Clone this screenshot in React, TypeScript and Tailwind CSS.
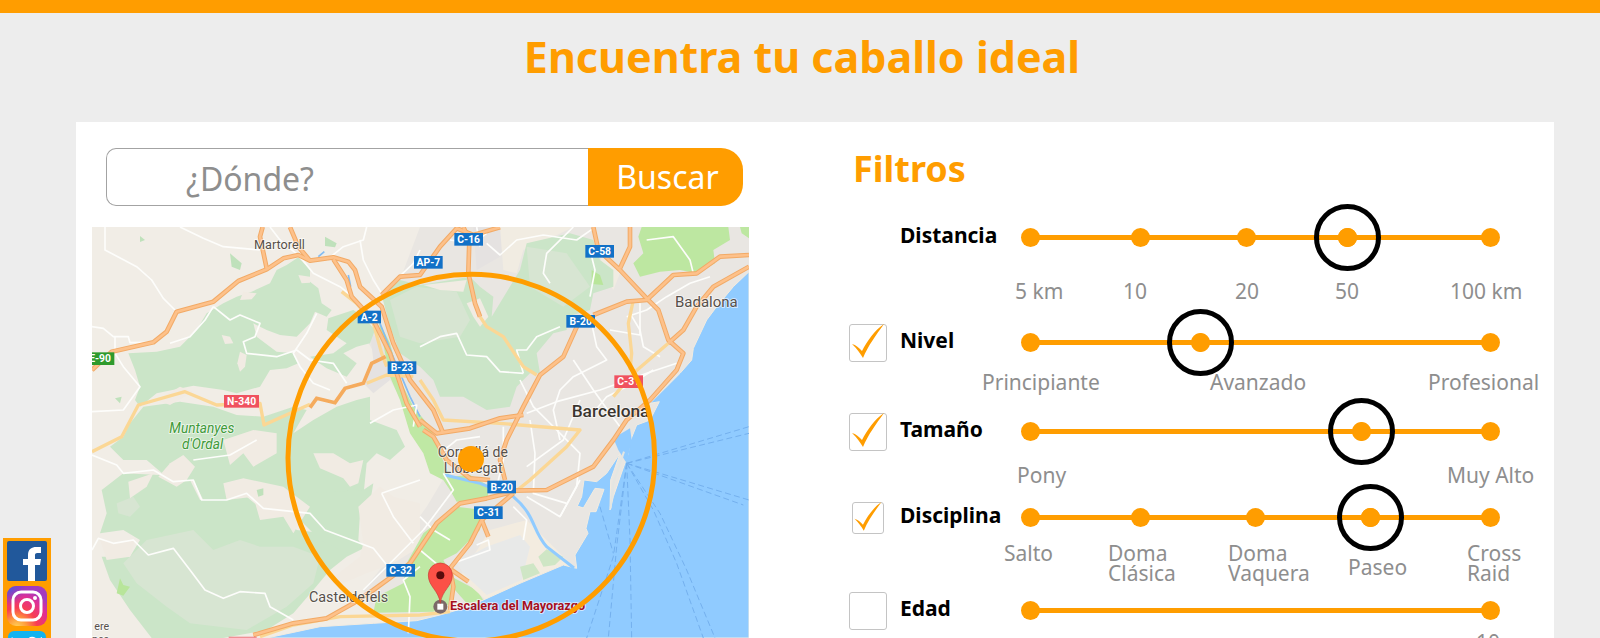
import { useState, type ReactNode } from "react";

type Shield = { x: number; y: number; w?: number; text: string; fill?: string };

const shields: Shield[] = [
  { x: 1002, y: 108, w: 86, text: "AP-7" },
  { x: 1123, y: 39, text: "C-16" },
  { x: 1516, y: 75, text: "C-58" },
  { x: 833, y: 272, w: 70, text: "A-2" },
  { x: 923, y: 424, text: "B-23" },
  { x: 1459, y: 285, text: "B-20" },
  { x: 1603, y: 466, text: "C-31", fill: "#f0525f" },
  { x: 432, y: 525, w: 105, text: "N-340", fill: "#f0525f" },
  { x: 17, y: 397, text: "E-90", fill: "#2f9a2c" },
  { x: 1222, y: 782, text: "B-20" },
  { x: 1182, y: 859, text: "C-31" },
  { x: 919, y: 1032, text: "C-32" },
];

const parks = [
  "M570 190L590 150L620 135L655 112L690 150V185L715 205L725 250L755 270L740 290L705 275L690 310L650 350L600 345L560 330L520 310L530 350L590 395L640 400L655 430L620 445L570 450L540 500L470 520L430 510L340 497L230 520L180 560L165 540L180 500L165 450L145 400L230 395L300 380L350 330L380 280L430 250L470 230L515 215Z",
  "M745 295L820 270L850 290L885 330L870 370L830 380L790 400L830 430L800 470L740 445L690 410L760 400L800 370L740 330Z",
  "M190 560L300 545L400 560L470 585L550 590L640 560L680 570L640 640L700 600L770 560L830 540L870 530V600L950 630L975 680L930 720L890 700L860 730L850 830L790 830L740 850L700 880L650 870L560 860L520 800L470 790L440 840L370 840L340 780L270 780L200 720L130 720L90 680L130 650L150 610Z",
  "M130 760L240 765L330 780L360 840L500 830L560 880L620 890L650 930L730 940L860 980L800 1010L750 1050L700 1110L640 1180L560 1230L430 1254H215L150 1170L90 1080L65 1010L150 1010L180 960L130 930L60 940L80 880L65 810Z",
  "M690 820L850 810L880 790L870 850L840 880L835 960L850 980L800 1000L720 960L660 900Z",
  "M905 225L960 180L1020 195L1170 170L1200 200L1240 230L1235 290L1320 150L1340 70L1470 40L1540 60L1560 120L1600 150V200L1540 220L1530 270L1460 290V330L1420 340L1370 400L1380 460L1350 460L1310 500L1290 560L1220 570L1150 530L1080 530L1060 480L1020 440L960 400L930 320Z",
];

const clearings = [
  "M300 500L230 540L270 555L340 515Z",
  "M480 395L500 405L495 440L480 455L472 430Z",
  "M425 345L450 350L460 370L435 372Z",
  "M655 165L690 170V188L665 190Z",
  "M490 215L530 220L515 238L480 240Z",
  "M700 700L760 700L810 730L850 720L835 790L810 800L790 775L720 745Z",
  "M270 730L310 705L345 740L320 780L290 800L235 770Z",
  "M430 660L520 630L590 640V700L520 740L490 700L450 735Z",
  "M145 785L220 760L200 800L150 835Z",
  "M430 790L490 775L610 800L690 860L640 940L610 890L540 900L520 830L440 840Z",
  "M60 960L120 970L165 960L150 1010L80 1020Z",
  "M835 860L900 800L940 830L1020 850V980L940 1030L860 1060L790 1090L750 1080L840 1010L850 970Z",
  "M1030 195L1160 180L1150 215L1080 210Z",
  "M1160 250L1200 235L1225 290L1200 320L1180 290Z",
];

const shade = [
  "M200 960L340 930L400 990L480 960L540 980L640 980L720 1010L700 1090L620 1160L500 1230L330 1210L260 1160L170 1090L130 1030Z",
  "M930 240L1010 200L1130 215L1170 300L1140 350L1020 370L960 350Z",
  "M1340 80L1460 100L1530 200L1450 260L1350 200Z",
  "M110 850L160 830L180 860L150 890L115 880Z",
];

const minorRoads = [
  "M36 320L70 325L100 350L145 350L150 368L220 367",
  "M300 21L370 55L430 80L540 90",
  "M75 21V90L170 140L215 180L250 235L285 270",
  "M570 21L600 60L660 110L700 160L780 200L830 240",
  "M840 60L850 120L880 180L905 220L1000 130L1020 90",
  "M740 120L790 80L850 60L860 21",
  "M36 575L130 570L180 500L130 440L105 400V350",
  "M400 260L450 300L480 285L540 310L525 350L490 365L500 400L590 410L650 390L690 420L760 430L800 490",
  "M270 370L330 350L375 300L400 260",
  "M710 280L680 340L640 400L660 440L700 490L750 510",
  "M870 610L940 570L1010 555L1000 620",
  "M36 705L110 735L130 760L220 750L280 785L340 780L365 840L440 840L500 820L550 865L690 880L735 930L880 985L920 1035",
  "M340 720L450 705L530 660",
  "M36 990L55 955L100 970L160 960L205 1005L280 985L330 1050L375 1110L430 1135L480 1115L555 1120L570 1160L640 1200",
  "M850 1110L1030 930L1120 810L1090 760",
  "M905 820L940 890L1000 970",
  "M905 820L1020 780",
  "M985 1240L990 1130L970 1080L1020 1040",
  "M1020 380L1080 350L1130 340L1160 405L1220 410L1260 455L1330 460",
  "M1110 60L1180 70L1220 40",
  "M1220 70L1260 105L1310 60L1390 45L1490 60L1540 25",
  "M1480 21L1400 100L1390 160L1410 190",
  "M1330 460L1310 390L1340 390L1370 350L1440 320",
  "M1530 230L1545 150L1530 90",
  "M1200 80L1190 21",
  "M1535 310L1550 380L1580 420L1480 470L1440 510L1420 570L1440 660",
  "M1340 580L1430 545L1560 510L1700 460L1790 430",
  "M1320 480L1360 560L1420 620L1500 700L1490 800L1440 890L1340 830",
  "M1350 600L1365 700L1360 820L1460 850",
  "M1480 420L1540 510L1590 580L1620 620",
  "M1500 540L1450 660L1340 740",
  "M1530 590L1580 530L1640 500L1720 450",
  "M1640 290L1700 270L1760 230L1830 190L1890 170",
  "M1650 280L1680 330L1690 380L1740 410",
  "M1590 330L1680 345V250",
  "M1700 60L1780 50L1830 120L1840 160",
  "M1020 890L1060 930L1110 960",
  "M1020 990L1080 1040",
  "M1120 1030L1230 990L1225 960L1190 975",
  "M1270 620L1270 720L1250 800",
  "M1300 860L1340 900L1330 960",
  "M1080 700L1130 660L1200 650",
  "M1440 890L1500 780",
];

const yellowRoads = [
  "M36 695L125 650L175 555L315 515L410 555L540 550L552 615L640 575L690 553",
  "M785 215L830 250L880 310L905 400L920 440",
  "M1200 290L1220 320L1270 350L1330 440L1370 465",
  "M1020 480L1060 540L1090 600L1260 610L1500 630L1460 680L1350 780L1300 820",
  "M1660 240L1645 310L1655 400L1650 450",
  "M1765 370L1660 460L1600 530",
  "M860 490L920 465L1000 470",
  "M1110 1175L1020 1185L780 1190L640 1215L540 1250",
];

const highways = [
  "M36 450L95 395L220 367L260 335L290 275L400 245L475 183L560 148L610 115L655 105L690 122L760 112L805 125L825 150L840 200L905 260L940 370L990 480L1060 570L1090 640",
  "M548 21L540 50L560 145",
  "M630 21L655 80L690 122",
  "M760 118L800 180L815 230L880 300L930 400L980 550L1020 620",
  "M905 225L960 170L1020 165L1080 80L1130 25L1180 45L1260 22",
  "M1150 21L1168 60L1165 160L1185 250L1200 290",
  "M1540 21L1555 90L1620 150L1700 235L1735 270L1765 360L1810 400L1790 450L1710 540L1640 600L1600 660L1540 740L1400 810L1300 812",
  "M1650 21V80L1620 145",
  "M1540 285L1640 245L1700 240L1780 165L1850 160L1920 110L2007 105",
  "M2007 140L1900 200L1850 260L1810 330L1765 370",
  "M1495 310L1450 410L1380 465L1330 560L1280 660L1260 720L1275 780",
  "M1330 585L1260 595L1170 625L1070 640L1020 600",
  "M520 1245L640 1210L740 1195L820 1150L880 1110L990 1030L1020 985L1070 910L1140 850L1220 835L1300 815",
  "M1300 820L1205 900L1170 970L1110 1045L1120 1100L1110 1170",
  "M1205 900L1225 950",
  "M1115 1050L1165 1085",
  "M1030 630L1060 650L1100 720L1170 775L1230 780",
];

const ferries = [
  "M1640 730L2007 620",
  "M1640 730L2007 640",
  "M1640 730L2007 840",
  "M1640 730L1990 855",
  "M1640 730L1720 870L1790 1030L1870 1254",
  "M1640 730L1740 880L1820 1050L1905 1254",
  "M1640 730L1650 960L1655 1254",
  "M1640 730L1610 980L1585 1254",
  "M1640 730L1600 1010L1520 1254",
  "M1560 860L1600 1000",
];

function Paths({ d, ...rest }: { d: string[] } & Omit<React.SVGProps<SVGGElement>, "d">) {
  return (
    <g {...rest}>
      {d.map((p) => (
        <path key={p} d={p} />
      ))}
    </g>
  );
}

function AreaMap() {
  return (
    <svg
      viewBox="36 21 1971 1233"
      preserveAspectRatio="xMidYMin slice"
      className="block h-[411px] w-full"
      fontFamily="Roboto, sans-serif"
      role="img"
      aria-label="Mapa de Barcelona"
    >
      <rect x="36" y="21" width="1971" height="1233" fill="#f1ede6" />
      <path d="M1020 21H2007V1254H1020L880 1190L850 1110L940 1000L1040 860L1100 760L1000 600L860 360L960 180Z" fill="#e9e6e2" />
      <path d="M870 340L920 370L930 480L880 520L850 490L880 420ZM880 1000L980 900L1010 960L930 1040ZM1180 22H1300L1260 110L1190 150Z" fill="#e5e2e1" />
      <path d="M1260 21H1480L1400 60L1330 90L1310 160L1270 150ZM1560 100L1620 160L1600 210L1570 160Z" fill="#f1ece2" />
      <Paths d={parks} fill="#cbe5c8" />
      <Paths d={shade} fill="#d7e5d2" />
      <Paths d={clearings} fill="#f1ebe3" />
      <path d="M450 100L485 130L480 150L455 140ZM180 48L195 60L180 66ZM735 50L770 70L765 82L735 78ZM105 535L125 530L120 550ZM530 810L550 805V825L535 830Z" fill="#bfe1bb" />
      <path d="M1685 21H1945L1950 60L1900 90L1905 130L1850 160L1800 150L1740 155L1680 170L1660 130L1690 100L1675 50ZM1980 21H2007V55L1985 40Z" fill="#bde7a1" />
      <path d="M120 1075L130 1095L150 1100L130 1127L110 1120ZM1535 150L1560 165L1570 195L1535 192Z" fill="#b8e59a" />
      <path
        d="M895 300L930 370L960 480L1000 560L1050 620L1080 700L1110 770L1170 765L1222 795L1225 835L1130 845L1110 810L1090 780L1050 760L1030 700L990 640L960 540L930 470Z"
        fill="#bfe8a4"
      />
      <path
        d="M1030 940L1130 860L1210 870L1200 930L1130 1000L1090 1020L1110 1060L1115 1150L1060 1175L880 1178L890 1130L970 1090L980 1030Z"
        fill="#bfe8a4"
      />
      <path d="M1115 1070L1190 1110L1210 1140L1160 1150L1125 1110Z" fill="#bfe8a4" />
      <path d="M1230 930L1340 900L1410 970L1480 1040L1330 1090L1215 1138L1140 1070Z" fill="#f3ece0" />
      <path d="M1130 1030L1220 980L1320 945L1350 980L1325 1080L1220 1125L1150 1060Z" fill="#e8e9e8" />
      <path d="M1375 1010L1400 988L1450 1010L1425 1035L1390 1040ZM1320 1040L1360 1030L1380 1060L1330 1080Z" fill="#cfe6c5" />
      <path
        d="M2007 155L1960 200L1910 260L1880 300L1840 385L1835 420L1800 460L1760 500L1710 550L1738 545L1710 600L1670 615L1648 670L1645 700L1600 830L1590 870L1592 780L1620 700L1580 760L1550 785L1512 780L1505 830L1492 858L1510 864L1545 805L1572 808L1548 875L1530 875L1518 925L1524 940L1485 1005L1490 1045L1450 1035L1320 1090L1210 1140L1150 1165L1080 1185L1010 1202L880 1210L720 1220L650 1235L560 1254H2007Z"
        fill="#90cbff"
        stroke="#f3ece0"
        strokeWidth="3"
      />
      <path d="M1600 655L1625 640L1650 625L1655 660L1640 730L1615 690Z" fill="#90cbff" />
      <path d="M1592 865L1600 790L1632 695" fill="none" stroke="#e4e6e2" strokeWidth="6" />
      <path d="M805 165L812 200M900 310L935 400L990 530L1020 590M715 110L733 95" fill="none" stroke="#84bcf2" strokeWidth="5" />
      <path d="M1095 765L1200 790L1300 830C1370 890 1355 930 1400 980L1482 1044" fill="none" stroke="#90cbff" strokeWidth="9" />
      <Paths d={minorRoads} fill="none" stroke="#fdfdfb" strokeWidth="5" strokeLinejoin="round" />
      <Paths d={yellowRoads} fill="none" stroke="#fbd795" strokeWidth="10" strokeLinejoin="round" />
      <Paths d={highways} fill="none" stroke="#f2aa66" strokeWidth="14" strokeLinejoin="round" />
      <Paths d={highways} fill="none" stroke="#fdc18a" strokeWidth="8" strokeLinejoin="round" />
      <path d="M690 563L710 535L765 548L795 505L850 490L875 430L917 410" fill="none" stroke="#f5ab5d" strokeWidth="11" />
      <Paths d={ferries} fill="none" stroke="#74b0ee" strokeWidth="3" strokeDasharray="18 10" />

      {shields.map((s) => (
        <g key={`${s.x}-${s.text}`}>
          <rect x={s.x} y={s.y} width={s.w ?? 86} height="38" fill={s.fill ?? "#1271c7"} />
          <text x={s.x + (s.w ?? 86) / 2} y={s.y + 30} textAnchor="middle" fontSize="31" fontWeight="700" fill="#fff">
            {s.text}
          </text>
        </g>
      ))}

      <g fill="#57504a" stroke="#fff" strokeOpacity="0.7" strokeWidth="5" paintOrder="stroke" fontSize="38">
        <text x="522" y="86">Martorell</text>
        <text x="1785" y="260" fontSize="45">Badalona</text>
        <text x="1073" y="711" fontSize="42">Cornellá de</text>
        <text x="1091" y="760" fontSize="42">Llobregat</text>
        <text x="687" y="1145" fontSize="43">Casteldefels</text>
        <text x="43" y="1230" fontSize="32">ere</text>
        <text x="36" y="1268" fontSize="32">nes</text>
        <text x="1475" y="592" fontSize="52" fontWeight="500" fill="#3b352f">Barcelona</text>
        <g fontStyle="italic" fill="#3f9a3a" fontSize="41">
          <text x="268" y="638">Muntanyes</text>
          <text x="306" y="686">d'Ordal</text>
        </g>
        <text x="1110" y="1171" fontSize="38" fontWeight="700" fill="#a5101f">Escalera del Mayorazgo</text>
      </g>
      <rect x="446" y="1250" width="84" height="10" fill="#f0525f" opacity="0.6" />

      <circle cx="1081" cy="1160" r="21" fill="#7b6868" />
      <rect x="1072" y="1151" width="18" height="18" fill="#fff" />
      <path d="M1081 1150C1076 1110 1045 1100 1045 1065A36 36 0 0 1 1117 1065C1117 1100 1086 1110 1081 1150Z" fill="#fb5147" stroke="#c93a34" strokeWidth="2" />
      <circle cx="1081" cy="1066" r="12" fill="#590c0c" />
      <circle cx="1174" cy="713" r="550" fill="none" stroke="#ff9d00" strokeWidth="15" />
      <circle cx="1173" cy="717" r="39" fill="#ff9d00" />
    </svg>
  );
}

type FilterProps = {
  id: string;
  label: string;
  stops?: number[];
  value?: number;
  checkable?: boolean;
  small?: boolean;
  className: string;
  children: ReactNode;
};

function FilterRow({ id, label, stops = [0, 100], value, checkable = true, small, className, children }: FilterProps) {
  const [position, setPosition] = useState(value ?? 0);
  const [active, setActive] = useState(value !== undefined);
  return (
    <div className={`flex ${className}`}>
      <div className="flex h-[67px] w-[55px] shrink-0 items-center pl-1">
        {checkable && (
          <span className="relative flex">
            <input
              type="checkbox"
              aria-label={`Filtrar por ${label}`}
              checked={active}
              onChange={(e) => setActive(e.target.checked)}
              className={`appearance-none rounded-[3px] border border-[#c4c4c4] bg-white ${small ? "mx-[3px] size-8" : "size-[38px]"}`}
            />
            {active && (
              <svg viewBox="0 0 38 38" className="pointer-events-none absolute inset-0 size-full overflow-visible" aria-hidden="true">
                <path d="M3 20C7 21 10 24 13 27C18 17 26 6 35 0C27 11 19 22 14 34C11 29 8 25 3 20Z" fill="#ff9d00" />
              </svg>
            )}
          </span>
        )}
      </div>
      <label htmlFor={id} className="flex h-[67px] w-[82px] shrink-0 items-center pb-1 text-[21px] font-bold text-black">
        {label}
      </label>
      <div className="min-w-0 flex-1">
        <div className="relative mr-[30px] ml-[14px] h-[67px]">
          <div className="absolute inset-x-[34px] top-[31px] h-[5px] bg-[#ff9d00]">
            {stops.map((s) => (
              <span key={s} className="absolute -top-[7px] -ml-[9px] size-[19px] rounded-full bg-[#ff9d00]" style={{ left: `${s}%` }} />
            ))}
          </div>
          <input
            id={id}
            type="range"
            min={0}
            max={100}
            step="any"
            disabled={!active}
            value={position}
            onChange={(e) => setPosition(Number(e.target.value))}
            className="absolute inset-0 m-0 h-[67px] w-full appearance-none bg-transparent [&::-webkit-slider-thumb]:size-[67px] [&::-webkit-slider-thumb]:appearance-none [&::-webkit-slider-thumb]:rounded-full [&::-webkit-slider-thumb]:border-[5px] [&::-webkit-slider-thumb]:border-black [&::-webkit-slider-thumb]:bg-[radial-gradient(circle,#ff9d00_9px,transparent_10px)] disabled:[&::-webkit-slider-thumb]:opacity-0"
          />
        </div>
        {children}
      </div>
    </div>
  );
}

const scale = "grid text-[21px] leading-5 font-normal text-[#8e8e8e]";

export default function App() {
  return (
    <div className="relative h-screen overflow-hidden bg-[#ededed] font-['Noto_Sans','Open_Sans',sans-serif]">
      <div className="h-[13px] bg-[#ff9d00]" />
      <h1 className="pt-[11px] pl-1 text-center text-[43px] leading-[66px] font-bold text-[#ff9d00]">Encuentra tu caballo ideal</h1>

      <main className="mt-8 mr-[46px] ml-[76px] grid min-h-screen grid-cols-[minmax(0,657fr)_minmax(0,709fr)] content-start gap-x-24 bg-white pl-4">
        <section className="pt-[26px]">
          <form className="mr-1.5 ml-3.5 flex h-[58px]" onSubmit={(e) => e.preventDefault()}>
            <input
              type="text"
              aria-label="¿Dónde?"
              placeholder="¿Dónde?"
              className="min-w-0 flex-1 rounded-l-[10px] border border-r-0 border-[#a3a3a3] bg-white pt-1 pl-[79px] text-[32px] text-[#8e8e8e] outline-none placeholder:text-[#8e8e8e] placeholder:opacity-100"
            />
            <button type="submit" className="w-[155px] rounded-r-[22px] bg-[#ff9d00] pl-1 text-[32px] leading-none text-white">
              Buscar
            </button>
          </form>
          <div className="mt-[21px]">
            <AreaMap />
          </div>
        </section>

        <section className="pt-6">
          <h2 className="pl-2 text-4xl leading-[46px] font-bold text-[#ff9d00]">Filtros</h2>
          <div className="pt-3">
            <FilterRow id="distancia" label="Distancia" checkable={false} stops={[0, 24, 47, 69, 100]} value={69} className="h-[105px]">
              <div className={`${scale} grid-cols-[108fr_112fr_100fr_115fr_104fr] pt-[10px] pl-[33px]`}>
                <span>5 km</span>
                <span>10</span>
                <span>20</span>
                <span>50</span>
                <span>100 km</span>
              </div>
            </FilterRow>
            <FilterRow id="nivel" label="Nivel" value={37} className="h-[89px]">
              <div className={`${scale} -mt-1 grid-cols-[228fr_218fr_126fr]`}>
                <span>Principiante</span>
                <span>Avanzado</span>
                <span>Profesional</span>
              </div>
            </FilterRow>
            <FilterRow id="tamano" label="Tamaño" value={72} className="h-[86px]">
              <div className={`${scale} grid-cols-[430fr_107fr] pl-[35px]`}>
                <span>Pony</span>
                <span>Muy Alto</span>
              </div>
            </FilterRow>
            <FilterRow id="disciplina" label="Disciplina" small stops={[0, 24, 49, 74, 100]} value={74} className="h-[93px]">
              <div className={`${scale} -mt-2 grid-cols-[104fr_120fr_120fr_119fr_87fr] pl-[22px]`}>
                <span>Salto</span>
                <span>Doma<br />Clásica</span>
                <span>Doma<br />Vaquera</span>
                <span className="self-center pt-2">Paseo</span>
                <span>Cross<br />Raid</span>
              </div>
            </FilterRow>
            <FilterRow id="edad" label="Edad" className="h-[93px]">
              <div className={`${scale} -mt-3 pr-[54px] text-right`}>
                <span>10</span>
              </div>
            </FilterRow>
          </div>
        </section>
      </main>

      <nav aria-label="Redes sociales" className="absolute top-[538px] left-[3px] flex w-12 flex-col gap-[5px] bg-[#ff9d00] px-1 py-[3px]">
        <a href="#facebook" aria-label="Facebook">
          <svg viewBox="0 0 40 40" className="block size-10">
            <rect width="40" height="40" rx="2" fill="#21589b" />
            <path d="M21 40V24H16V18H21V14C21 8 25 6 29 6H34V12H31C28 12 28 13 28 15V18H34L33 24H28V40Z" fill="#fff" />
          </svg>
        </a>
        <a href="#instagram" aria-label="Instagram">
          <svg viewBox="0 0 40 40" className="block size-10">
            <defs>
              <radialGradient id="igWarm" cx="0.25" cy="1.05" r="1">
                <stop offset="0" stopColor="#ffd75a" />
                <stop offset="0.25" stopColor="#ff9a3c" />
                <stop offset="0.5" stopColor="#f83e52" />
                <stop offset="0.8" stopColor="#e02f95" />
                <stop offset="1" stopColor="#a33ac0" />
              </radialGradient>
              <radialGradient id="igCool" cx="0" cy="0" r="0.5">
                <stop offset="0" stopColor="#3f61e0" />
                <stop offset="1" stopColor="#6a40d0" stopOpacity="0" />
              </radialGradient>
            </defs>
            <rect width="40" height="40" rx="9" fill="url(#igWarm)" />
            <rect width="40" height="40" rx="9" fill="url(#igCool)" />
            <rect x="6" y="6" width="28" height="28" rx="8" fill="none" stroke="#fff" strokeWidth="3" />
            <circle cx="20" cy="20" r="6.5" fill="none" stroke="#fff" strokeWidth="3" />
            <circle cx="28" cy="12" r="2" fill="#fff" />
          </svg>
        </a>
        <a href="#twitter" aria-label="Twitter">
          <svg viewBox="0 0 40 40" className="block size-10">
            <rect x="1" width="38" height="40" rx="6" fill="#12b3f0" />
            <path d="M36 9C35 10 33 11 32 11C34 10 35 8 35 6C33 7 32 8 30 8C25 3 18 7 20 14C14 13 9 11 5 6C3 10 4 14 7 16L4 15C4 19 7 22 10 23H7C8 26 11 28 14 28C11 31 7 32 3 31C17 39 33 30 32 13Z" fill="#fff" />
          </svg>
        </a>
      </nav>
    </div>
  );
}
